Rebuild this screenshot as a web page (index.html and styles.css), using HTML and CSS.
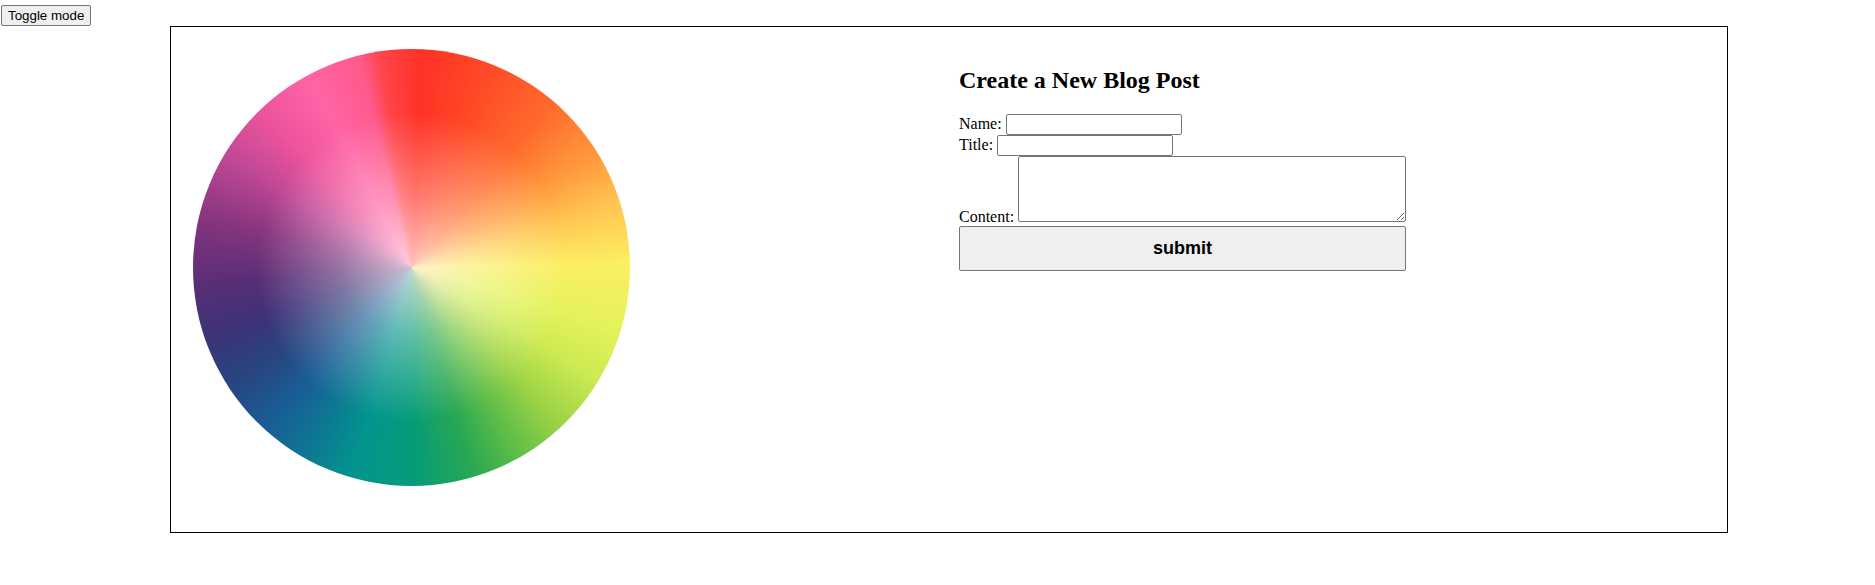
FILE: index.html
```html
<!DOCTYPE html>
<html>
<head>
<meta charset="utf-8">
<link rel="stylesheet" href="styles.css">
</head>
<body>
<div class="topbar"><button class="toggle">Toggle mode</button></div>
<div class="frame">
  <div class="wheel-col"><div class="wheel"></div></div>
  <div class="form-col">
    <h2 class="title">Create a New Blog Post</h2>
    <form class="post-form">
      <div class="row">Name: <input type="text" class="field"></div>
      <div class="row">Title: <input type="text" class="field"></div>
      <div class="row">Content: <textarea class="content"></textarea></div>
      <button type="button" class="submit">submit</button>
    </form>
  </div>
</div>
</body>
</html>
```

FILE: styles.css
```css
html, body {
  margin: 0;
  padding: 0;
  background: #fff;
}
body {
  font-family: "Liberation Serif", "Times New Roman", serif;
  font-size: 16px;
  color: #000;
}
.topbar {
  height: 26px;
  padding-top: 5px;
  box-sizing: border-box;
}
.toggle {
  display: block;
  margin: 0 0 0 1px;
  height: 21px;
  padding: 1px 6px;
  font-family: "Liberation Sans", Arial, sans-serif;
  font-size: 13.33px;
  color: #000;
  background: #efefef;
  border: 1px solid #767676;
  border-radius: 2px;
}
.frame {
  margin-left: 170px;
  width: 1558px;
  height: 507px;
  box-sizing: border-box;
  border: 1px solid #000;
  display: flex;
}
.wheel-col {
  width: 788px;
  padding: 22px;
  box-sizing: border-box;
}
.wheel {
  width: 437px;
  height: 437px;
  border-radius: 50%;
  background:
    radial-gradient(circle, rgba(255,240,240,0.75) 0%, rgba(255,255,255,0.35) 22%, rgba(255,255,255,0) 50%),
    conic-gradient(from -14deg,
      #ff5a8c 0deg,
      #ff4448 6deg,
      #ff3226 17deg,
      #ff4a26 35deg,
      #ff6a2c 55deg,
      #ff9a3e 73deg,
      #ffc652 87deg,
      #fbef62 103deg,
      #e6f25c 120deg,
      #cdea52 135deg,
      #9ed446 150deg,
      #5cbc48 165deg,
      #2aa852 177deg,
      #069c78 193deg,
      #03948e 210deg,
      #0d7892 223deg,
      #1a5c96 237deg,
      #28457f 251deg,
      #3c3278 265deg,
      #5a2e76 280deg,
      #86347e 297deg,
      #c04896 315deg,
      #ee549c 330deg,
      #ff64a6 346deg,
      #ff5a8c 360deg);
}
.form-col {
  flex: 1;
  padding-top: 20px;
}
.title {
  margin: 20px 0;
  font-size: 24px;
  font-weight: bold;
}
.post-form {
  display: inline-block;
  width: 447px;
}
.row {
  white-space: nowrap;
}
.field {
  width: 176px;
  height: 21px;
  box-sizing: border-box;
  margin: 0;
  padding: 1px 2px;
  border: 1px solid #767676;
  border-radius: 2px;
  font-family: "Liberation Sans", Arial, sans-serif;
  font-size: 13.33px;
}
.content {
  width: 388px;
  height: 66px;
  box-sizing: border-box;
  margin: 0;
  padding: 2px;
  border: 1px solid #767676;
  border-radius: 2px;
  font-family: "Liberation Mono", monospace;
  font-size: 13.33px;
}
.submit {
  display: block;
  width: 447px;
  height: 45px;
  margin: 0;
  padding: 0;
  font-family: "Liberation Sans", Arial, sans-serif;
  font-size: 18px;
  font-weight: bold;
  color: #000;
  background: #efefef;
  border: 1px solid #767676;
  border-radius: 2px;
}
```
